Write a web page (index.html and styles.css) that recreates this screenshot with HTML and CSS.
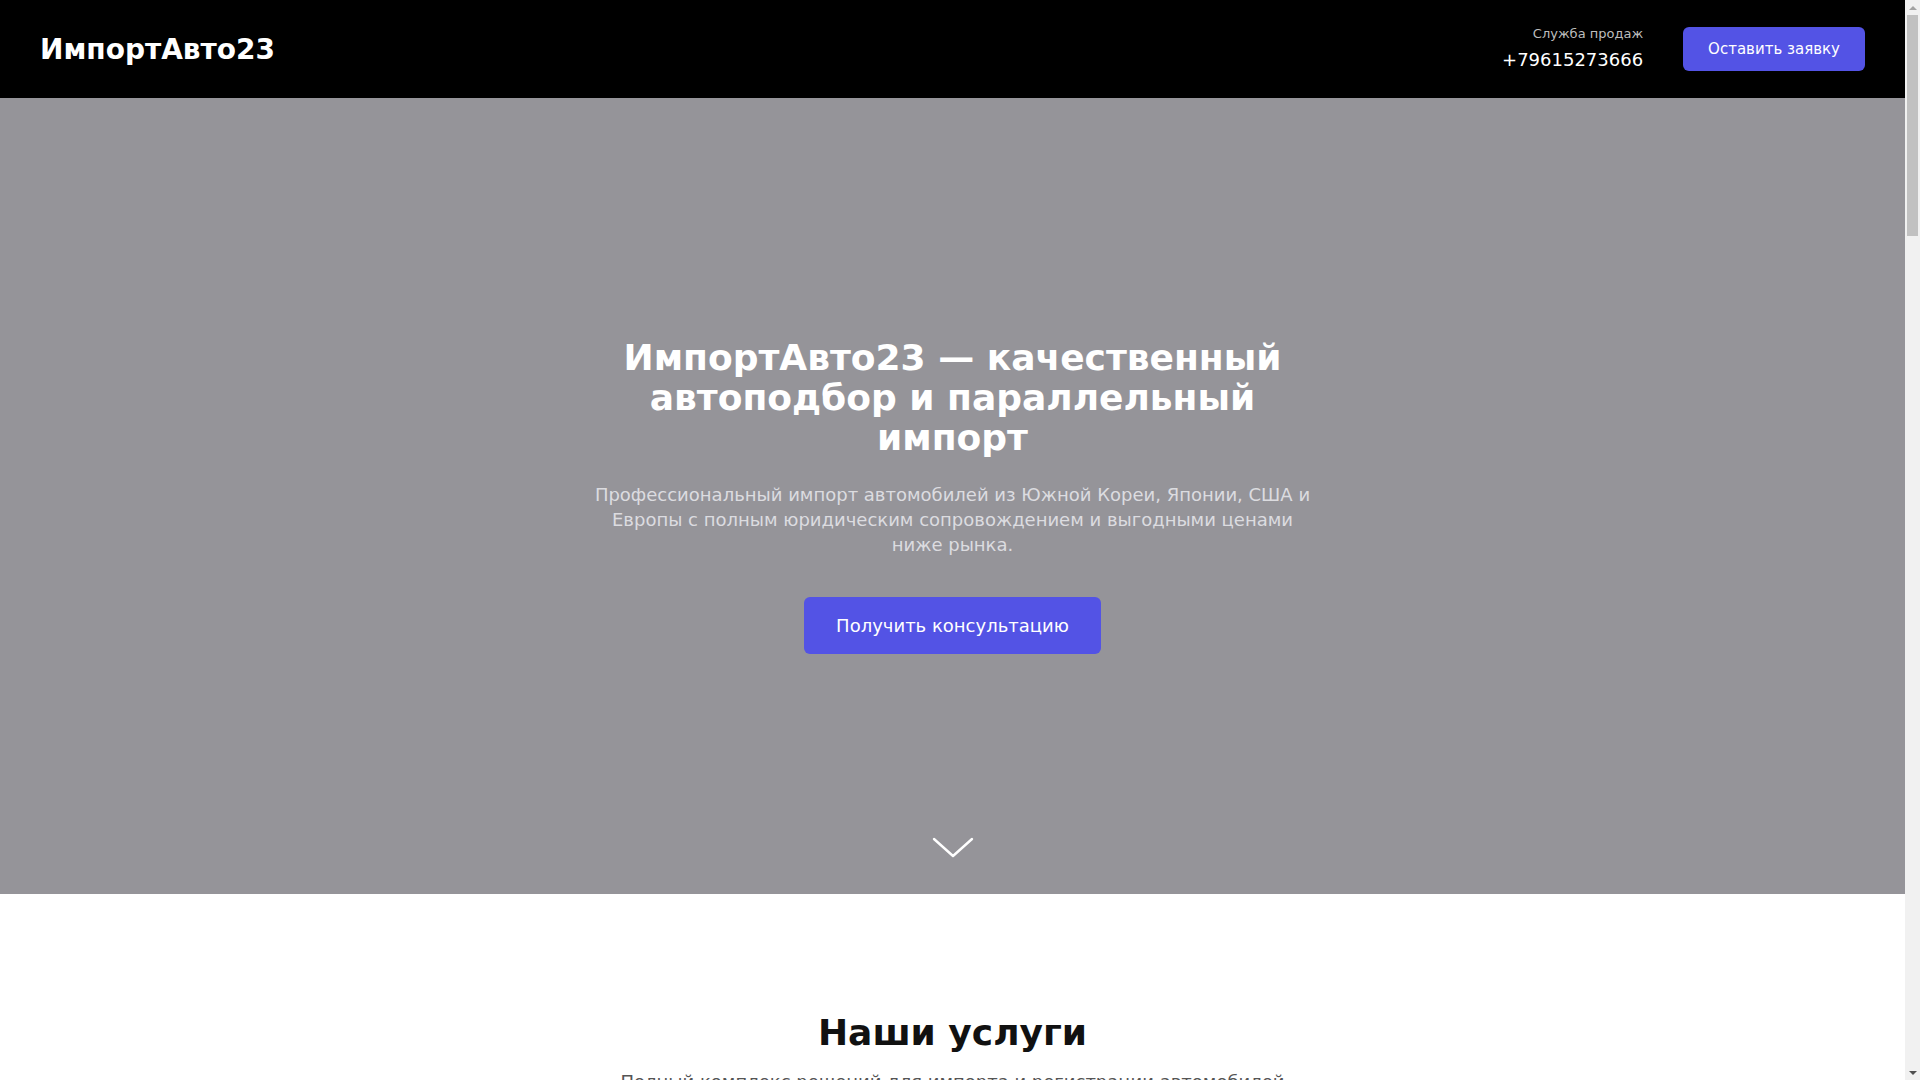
FILE: index.html
```html
<!DOCTYPE html>
<html lang="ru">
<head>
    <meta charset="UTF-8">
    <meta name="viewport" content="width=device-width, initial-scale=1.0">
    <title>ИмпортАвто23</title>
    <link rel="stylesheet" href="styles.css">
</head>
<body>
    <div class="page">
        <header class="header">
            <div class="logo">ИмпортАвто23</div>
            <div class="header-right">
                <div class="sales">
                    <div class="sales-label">Служба продаж</div>
                    <div class="sales-phone">+79615273666</div>
                </div>
                <button class="btn btn-small">Оставить заявку</button>
            </div>
        </header>

        <section class="hero">
            <div class="hero-content">
                <h1>ИмпортАвто23 — качественный автоподбор и параллельный импорт</h1>
                <p class="hero-text">Профессиональный импорт автомобилей из Южной Кореи, Японии, США и Европы с полным юридическим сопровождением и выгодными ценами ниже рынка.</p>
                <button class="btn btn-large">Получить консультацию</button>
            </div>
            <svg class="hero-arrow" width="42" height="22" viewBox="0 0 42 22" fill="none">
                <path d="M2 2 L21 19 L40 2" stroke="#fff" stroke-width="2.4" stroke-linecap="round" stroke-linejoin="round"/>
            </svg>
        </section>

        <section class="section">
            <h2>Наши услуги</h2>
            <p class="section-text">Полный комплекс решений для импорта и регистрации автомобилей</p>
            <div class="cards">
                <div class="card">
                    <h3>Подбор автомобиля</h3>
                    <p>Поиск и проверка автомобиля на аукционах и у дилеров по вашим требованиям и бюджету.</p>
                </div>
                <div class="card">
                    <h3>Доставка</h3>
                    <p>Организация доставки автомобиля до Краснодара с полным страхованием груза.</p>
                </div>
                <div class="card">
                    <h3>Таможенное оформление</h3>
                    <p>Расчёт пошлин, оформление документов и прохождение таможни под ключ.</p>
                </div>
                <div class="card">
                    <h3>Параллельный импорт</h3>
                    <p>Ввоз автомобилей брендов, ушедших с российского рынка, с официальной гарантией.</p>
                </div>
                <div class="card">
                    <h3>Регистрация</h3>
                    <p>Получение СБКТС, ЭПТС и постановка на учёт в ГИБДД.</p>
                </div>
                <div class="card">
                    <h3>Сопровождение</h3>
                    <p>Юридическая поддержка сделки на всех этапах, от договора до получения ключей.</p>
                </div>
            </div>
        </section>

        <section class="section section-gray">
            <h2>Почему выбирают нас</h2>
            <p class="section-text">Работаем прозрачно и отвечаем за результат</p>
            <div class="cards">
                <div class="card">
                    <h3>Цены ниже рынка</h3>
                    <p>Экономия до 30% по сравнению с покупкой у официальных дилеров.</p>
                </div>
                <div class="card">
                    <h3>Проверенные авто</h3>
                    <p>Каждый автомобиль проходит проверку истории и технического состояния.</p>
                </div>
                <div class="card">
                    <h3>Договор</h3>
                    <p>Фиксируем стоимость и сроки в официальном договоре.</p>
                </div>
            </div>
        </section>

        <section class="section">
            <h2>Как мы работаем</h2>
            <p class="section-text">Пять простых шагов до вашего нового автомобиля</p>
            <ol class="steps">
                <li>Заявка и консультация</li>
                <li>Подбор и проверка автомобиля</li>
                <li>Покупка и доставка</li>
                <li>Таможенное оформление</li>
                <li>Регистрация и передача ключей</li>
            </ol>
        </section>

        <section class="section section-gray">
            <h2>Оставить заявку</h2>
            <p class="section-text">Мы перезвоним в течение 15 минут</p>
            <form class="form">
                <input type="text" placeholder="Ваше имя">
                <input type="tel" placeholder="Телефон">
                <textarea placeholder="Какой автомобиль вас интересует?"></textarea>
                <button type="button" class="btn btn-large">Отправить</button>
            </form>
        </section>

        <footer class="footer">
            <div class="logo">ИмпортАвто23</div>
            <div class="footer-text">+79615273666 · Краснодар</div>
        </footer>
    </div>

    <!-- page scrollbar -->
    <div class="scrollbar" aria-hidden="true">
        <div class="scroll-btn scroll-up"></div>
        <div class="scroll-thumb"></div>
        <div class="scroll-btn scroll-down"></div>
    </div>
</body>
</html>
```

FILE: styles.css
```css
body {
    margin: 0;
    height: 100vh;
    display: flex;
    overflow: hidden;
    font-family: "DejaVu Sans", sans-serif;
    color: #111;
    background: #fff;
}

.page {
    flex: 1;
    overflow-y: auto;
    scrollbar-width: none;
}

.scrollbar {
    width: 15px;
    flex-shrink: 0;
    background: #f1f1f1;
    display: flex;
    flex-direction: column;
    align-items: center;
}

.scroll-btn {
    height: 15px;
    width: 15px;
    display: flex;
    justify-content: center;
    align-items: center;
}

.scroll-btn::after {
    content: "";
    border-left: 4px solid transparent;
    border-right: 4px solid transparent;
}

.scroll-up::after {
    border-bottom: 4px solid #a3a3a3;
}

.scroll-down {
    margin-top: auto;
}

.scroll-down::after {
    border-top: 4px solid #505050;
}

.scroll-thumb {
    width: 11px;
    height: 221px;
    background: #c1c1c1;
}

.header {
    height: 98px;
    background: #000;
    color: #fff;
    display: flex;
    justify-content: space-between;
    align-items: center;
    padding: 0 40px;
}

.logo {
    font-size: 28px;
    font-weight: bold;
}

.header-right {
    display: flex;
    align-items: center;
    gap: 40px;
}

.sales {
    text-align: right;
}

.sales-label {
    font-size: 13px;
    line-height: 20px;
    margin-bottom: 2px;
    color: #bdbdbd;
}

.sales-phone {
    font-size: 18px;
    line-height: 28px;
}

.btn {
    border: none;
    border-radius: 6px;
    background-color: #5353e5;
    color: #fff;
    font-family: inherit;
    cursor: pointer;
}

.btn-small {
    font-size: 15px;
    line-height: 20px;
    padding: 12px 25px;
}

.btn-large {
    font-size: 18px;
    line-height: 25px;
    padding: 16px 32px;
}

.hero {
    height: 796px;
    background: #959499;
    display: flex;
    justify-content: center;
    align-items: center;
    position: relative;
    text-align: center;
}

.hero-content {
    max-width: 720px;
    padding: 0 24px 1px;
}

.hero h1 {
    margin: 0 0 24px;
    font-size: 36px;
    line-height: 40px;
    color: #fff;
}

.hero-text {
    margin: 0 0 40px;
    font-size: 18px;
    line-height: 25px;
    color: #dcdce0;
}

.hero-arrow {
    position: absolute;
    left: 50%;
    bottom: 35px;
    margin-left: -21px;
}

.section {
    padding: 119px 40px 110px;
    text-align: center;
}

.section-gray {
    background: #f4f4f6;
}

.section h2 {
    margin: 0 0 16px;
    font-size: 36px;
    line-height: 40px;
}

.section-text {
    margin: 0 0 56px;
    font-size: 18px;
    line-height: 25px;
    color: #555;
}

.cards {
    max-width: 1200px;
    margin: 0 auto;
    display: grid;
    grid-template-columns: repeat(3, 1fr);
    gap: 32px;
    text-align: left;
}

.card {
    background: #fff;
    border: 1px solid #e5e5ea;
    border-radius: 10px;
    padding: 32px;
    min-height: 140px;
}

.card h3 {
    margin: 0 0 12px;
    font-size: 20px;
}

.card p {
    margin: 0;
    color: #555;
    line-height: 1.5;
}

.steps {
    max-width: 700px;
    margin: 0 auto;
    text-align: left;
    font-size: 20px;
    line-height: 2.6;
}

.form {
    max-width: 560px;
    margin: 0 auto;
    display: flex;
    flex-direction: column;
    gap: 16px;
}

.form input, .form textarea {
    padding: 14px;
    font-size: 16px;
    font-family: inherit;
    border: 1px solid #ccc;
    border-radius: 6px;
}

.form textarea {
    height: 140px;
}

.footer {
    background: #000;
    color: #fff;
    padding: 60px 40px 200px;
    display: flex;
    justify-content: space-between;
    align-items: flex-start;
}

.footer-text {
    color: #bdbdbd;
}
```
